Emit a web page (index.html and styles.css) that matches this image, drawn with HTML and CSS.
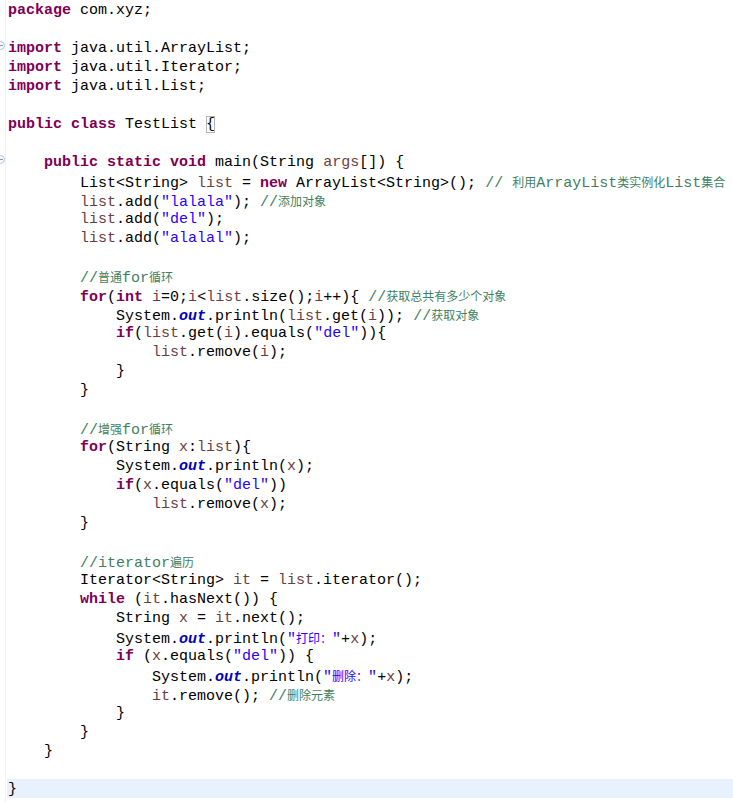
FILE: index.html
```html
<!DOCTYPE html>
<html>
<head>
<meta charset="utf-8">
<link rel="stylesheet" href="styles.css">
</head>
<body>
<div class="editor">
<div class="ruler"></div>
<span class="fold fold-a"></span>
<span class="fold fold-b"></span>
<div class="code">
<div class="ln"><span class="k">package</span> com.xyz;</div>
<div class="ln"> </div>
<div class="ln"><span class="k">import</span> java.util.ArrayList;</div>
<div class="ln"><span class="k">import</span> java.util.Iterator;</div>
<div class="ln"><span class="k">import</span> java.util.List;</div>
<div class="ln"> </div>
<div class="ln"><span class="k">public</span> <span class="k">class</span> TestList <span class="match">{</span></div>
<div class="ln"> </div>
<div class="ln">    <span class="k">public</span> <span class="k">static</span> <span class="k">void</span> main(String <span class="v">args</span>[]) {</div>
<div class="ln">        List&lt;String&gt; <span class="v">list</span> = <span class="k">new</span> ArrayList&lt;String&gt;(); <span class="c">// <span class="cjk">利用</span>ArrayList<span class="cjk">类实例化</span>List<span class="cjk">集合</span></span></div>
<div class="ln">        <span class="v">list</span>.add(<span class="s">"lalala"</span>); <span class="c">//<span class="cjk">添加对象</span></span></div>
<div class="ln">        <span class="v">list</span>.add(<span class="s">"del"</span>);</div>
<div class="ln">        <span class="v">list</span>.add(<span class="s">"alalal"</span>);</div>
<div class="ln"> </div>
<div class="ln">        <span class="c">//<span class="cjk">普通</span>for<span class="cjk">循环</span></span></div>
<div class="ln">        <span class="k">for</span>(<span class="k">int</span> <span class="v">i</span>=0;<span class="v">i</span>&lt;<span class="v">list</span>.size();<span class="v">i</span>++){ <span class="c">//<span class="cjk">获取总共有多少个对象</span></span></div>
<div class="ln">            System.<span class="f">out</span>.println(<span class="v">list</span>.get(<span class="v">i</span>)); <span class="c">//<span class="cjk">获取对象</span></span></div>
<div class="ln">            <span class="k">if</span>(<span class="v">list</span>.get(<span class="v">i</span>).equals(<span class="s">"del"</span>)){</div>
<div class="ln">                <span class="v">list</span>.remove(<span class="v">i</span>);</div>
<div class="ln">            }</div>
<div class="ln">        }</div>
<div class="ln"> </div>
<div class="ln">        <span class="c">//<span class="cjk">增强</span>for<span class="cjk">循环</span></span></div>
<div class="ln">        <span class="k">for</span>(String <span class="v">x</span>:<span class="v">list</span>){</div>
<div class="ln">            System.<span class="f">out</span>.println(<span class="v">x</span>);</div>
<div class="ln">            <span class="k">if</span>(<span class="v">x</span>.equals(<span class="s">"del"</span>))</div>
<div class="ln">                <span class="v">list</span>.remove(<span class="v">x</span>);</div>
<div class="ln">        }</div>
<div class="ln"> </div>
<div class="ln">        <span class="c">//iterator<span class="cjk">遍历</span></span></div>
<div class="ln">        Iterator&lt;String&gt; <span class="v">it</span> = <span class="v">list</span>.iterator();</div>
<div class="ln">        <span class="k">while</span> (<span class="v">it</span>.hasNext()) {</div>
<div class="ln">            String <span class="v">x</span> = <span class="v">it</span>.next();</div>
<div class="ln">            System.<span class="f">out</span>.println(<span class="s">"<span class="cjk">打印：</span>"</span>+<span class="v">x</span>);</div>
<div class="ln">            <span class="k">if</span> (<span class="v">x</span>.equals(<span class="s">"del"</span>)) {</div>
<div class="ln">                System.<span class="f">out</span>.println(<span class="s">"<span class="cjk">删除：</span>"</span>+<span class="v">x</span>);</div>
<div class="ln">                <span class="v">it</span>.remove(); <span class="c">//<span class="cjk">删除元素</span></span></div>
<div class="ln">            }</div>
<div class="ln">        }</div>
<div class="ln">    }</div>
<div class="ln"> </div>
<div class="ln current">}</div>
</div>
</div>
</body>
</html>
```
FILE: styles.css
```css
html, body {
  margin: 0;
  padding: 0;
  background: #ffffff;
}
.editor {
  position: relative;
  width: 733px;
  height: 802px;
  overflow: hidden;
  background: #ffffff;
}
.ruler {
  position: absolute;
  left: 5px;
  top: 0;
  bottom: 0;
  width: 1px;
  background: #f2f2f2;
}
.fold {
  position: absolute;
  left: -4px;
  width: 7px;
  height: 7px;
  border: 1px solid #b8c4d4;
  border-radius: 50%;
  background: #f4f7fb;
}
.fold::after {
  content: "";
  position: absolute;
  left: 2px;
  top: 3px;
  width: 4px;
  height: 1px;
  background: #8a9ab0;
}
.fold-a { top: 41px; }
.fold-b { top: 155px; }
.code {
  padding: 0 0 0 7px;
  font-family: "Liberation Mono", "DejaVu Sans Mono", monospace;
  font-size: 15px;
  color: #000000;
}
.ln {
  height: 19px;
  line-height: 21px;
  white-space: pre;
  padding-left: 1px;
}
.current {
  background: #e8f2fe;
}
.k {
  color: #7f0055;
  font-weight: bold;
}
.s {
  color: #2a00ff;
}
.c {
  color: #3f7f5f;
}
.v {
  color: #6a3e3e;
}
.f {
  color: #0000c0;
  font-weight: bold;
  font-style: italic;
}
.cjk {
  font-family: "Noto Sans CJK SC", sans-serif;
  font-size: 12px;
}
.match {
  outline: 1px solid #b4b4b4;
  outline-offset: -1px;
}
```
